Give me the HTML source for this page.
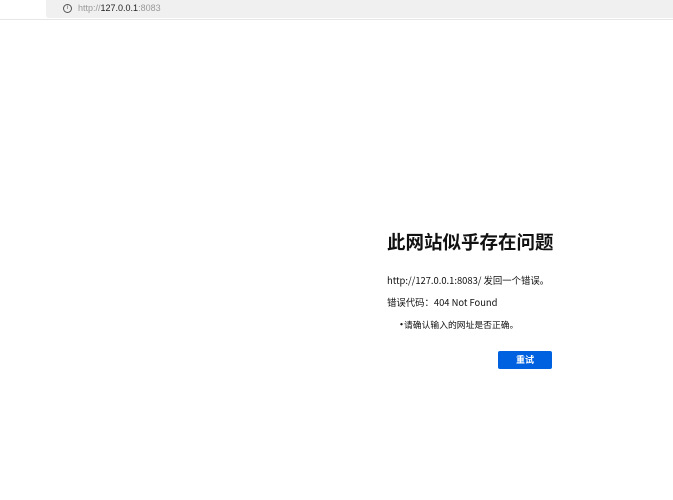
<!DOCTYPE html>
<html><head><meta charset="utf-8"><style>
body{margin:0;width:673px;height:500px;background:#fff;position:relative;overflow:hidden;font-family:"Liberation Sans","Noto Sans CJK SC",sans-serif;}
.bar{position:absolute;left:46px;top:0;width:627px;height:18px;background:#f0f0f0;border-bottom-left-radius:3px;}
.line{position:absolute;left:0;top:19px;width:673px;height:1px;background:#e6e6e6;}
.url{position:absolute;left:78px;top:3px;font-size:9px;color:#999;}
.url b{color:#222;font-weight:normal;}
.ic{position:absolute;left:63px;top:4px;width:7px;height:7px;border:1px solid #555;border-radius:50%;font-size:6px;line-height:7px;text-align:center;color:#555;}
h1{position:absolute;left:387px;top:229px;margin:0;font-size:18.5px;font-weight:bold;color:#111;font-family:"Noto Sans CJK SC",sans-serif;white-space:nowrap;}
.t{position:absolute;left:387px;font-size:9.4px;color:#111;white-space:nowrap;font-family:"Noto Sans CJK SC",sans-serif;}
.btn{position:absolute;left:498px;top:351px;width:54px;height:18px;background:#0061e0;border-radius:2px;color:#fff;font-size:9px;font-weight:bold;text-align:center;line-height:18px;font-family:"Noto Sans CJK SC",sans-serif;}
</style></head><body>
<div class="bar"></div><div class="line"></div>
<div class="ic">i</div>
<div class="url">http://<b>127.0.0.1</b>:8083</div>
<h1>此网站似乎存在问题</h1>
<div class="t" style="top:273px">http://127.0.0.1:8083/ 发回一个错误。</div>
<div class="t" style="top:295px">错误代码：404 Not Found</div>
<div class="t" style="top:318px;left:396px;font-size:8.8px"><span style="font-size:11px;line-height:8px">•</span></div>
<div class="t" style="top:318px;left:404px;font-size:8.8px">请确认输入的网址是否正确。</div>
<div class="btn">重试</div>
</body></html>
